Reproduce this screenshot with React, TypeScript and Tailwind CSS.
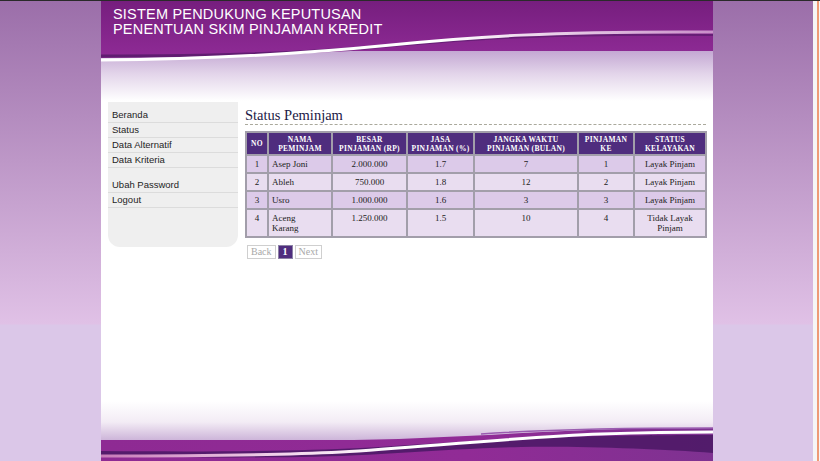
import React from "react";

const menu = [
  { label: "Beranda" },
  { label: "Status" },
  { label: "Data Alternatif" },
  { label: "Data Kriteria", gapAfter: true },
  { label: "Ubah Password" },
  { label: "Logout" },
];

const peminjam = [
  { no: 1, nama: "Asep Joni", besar: "2.000.000", jasa: "1.7", jangka: "7", ke: "1", status: "Layak Pinjam" },
  { no: 2, nama: "Ableh", besar: "750.000", jasa: "1.8", jangka: "12", ke: "2", status: "Layak Pinjam" },
  { no: 3, nama: "Usro", besar: "1.000.000", jasa: "1.6", jangka: "3", ke: "3", status: "Layak Pinjam" },
  { no: 4, nama: "Aceng Karang", besar: "1.250.000", jasa: "1.5", jangka: "10", ke: "4", status: "Tidak Layak Pinjam" },
];

function HeaderArt() {
  return (
    <svg className="absolute inset-0" width="612" height="100" viewBox="0 0 612 100">
      <defs>
        <linearGradient id="hFade" x1="0" y1="0" x2="0" y2="1">
          <stop offset="0" stopColor="#bea0cf" />
          <stop offset="0.5" stopColor="#e3d5ea" />
          <stop offset="1" stopColor="#ffffff" />
        </linearGradient>
        <linearGradient id="hPurple" x1="0" y1="0" x2="0" y2="1">
          <stop offset="0" stopColor="#761e7e" />
          <stop offset="1" stopColor="#8f2b96" />
        </linearGradient>
        <linearGradient id="hStreak" x1="0" y1="0" x2="1" y2="0">
          <stop offset="0" stopColor="#ffffff" />
          <stop offset="0.55" stopColor="#ffffff" />
          <stop offset="1" stopColor="#c98fc9" />
        </linearGradient>
      </defs>
      <rect x="0" y="46" width="612" height="54" fill="url(#hFade)" />
      <path d="M0,0 H612 V50 H250 C200,53 110,56 0,57 Z" fill="url(#hPurple)" />
      <path d="M0,55 C110,55 200,52 260,47" stroke="#4d1762" strokeWidth="3" fill="none" opacity="0.7" />
      <path d="M260,46 C360,36 450,30 612,32" stroke="#4d1762" strokeWidth="2" fill="none" opacity="0.55" transform="translate(0,2)" />
      <path
        d="M0,59 C120,58 210,52 290,44 C370,36 450,30 612,31"
        stroke="url(#hStreak)"
        strokeWidth="3"
        fill="none"
      />
    </svg>
  );
}

function FooterArt() {
  return (
    <svg className="absolute inset-0" width="612" height="60" viewBox="0 0 612 60">
      <defs>
        <linearGradient id="fFade" x1="0" y1="0" x2="0" y2="1">
          <stop offset="0" stopColor="#ffffff" />
          <stop offset="0.35" stopColor="#f3ecf5" />
          <stop offset="0.65" stopColor="#cdb5d9" />
          <stop offset="1" stopColor="#b89ccb" />
        </linearGradient>
        <linearGradient id="fPurple" x1="0" y1="0" x2="1" y2="0">
          <stop offset="0" stopColor="#8e2a93" />
          <stop offset="0.6" stopColor="#912b96" />
          <stop offset="1" stopColor="#7e3291" />
        </linearGradient>
        <linearGradient id="fStreak" x1="0" y1="0" x2="1" y2="0">
          <stop offset="0" stopColor="#c77ab8" />
          <stop offset="0.3" stopColor="#f3d6ec" />
          <stop offset="0.5" stopColor="#ffffff" />
          <stop offset="1" stopColor="#ffffff" />
        </linearGradient>
      </defs>
      <rect x="0" y="0" width="612" height="60" fill="url(#fFade)" />
      <path d="M0,39 H230 C330,39 430,30 520,28 L612,27 V60 H0 Z" fill="url(#fPurple)" />
      <path
        d="M0,50 C120,51 200,50 260,47 C340,42 430,36 500,35 C560,34 590,34 612,34 V52 C560,48 480,45 420,46 C340,48 280,55 200,56 C120,57 60,56 0,55 Z"
        fill="#4e1967"
        opacity="0.9"
      />
      <path d="M380,33 C450,28 540,27 612,27" stroke="#9a5cb0" strokeWidth="1.5" fill="none" />
      <path
        d="M0,55 C100,55 180,54 240,51 C320,46 420,36 500,33 C560,31 590,31 612,31"
        stroke="url(#fStreak)"
        strokeWidth="3"
        fill="none"
      />
    </svg>
  );
}

export default function App() {
  return (
    <div className="w-[820px] h-[461px] overflow-hidden flex flex-col bg-[linear-gradient(to_bottom,#9b6ea9_0px,#e0c1e6_324px,#dbc7e8_325px,#dbc7e8_100%)]">
      <div className="h-px bg-[#2a2a2a]" />
      <div className="flex flex-1">
        <div className="w-[101px] shrink-0" />

        {/* KONTEN UTAMA */}
        <div className="w-[612px] shrink-0 bg-white flex flex-col">
          {/* HEADER */}
          <div className="relative h-[100px]">
            <HeaderArt />
            <div className="relative pl-[12px] pt-[6px] text-white text-[14.5px] leading-[15px] tracking-[0.2px] font-['Liberation_Sans',sans-serif]">
              <p>SISTEM PENDUKUNG KEPUTUSAN</p>
              <p>PENENTUAN SKIM PINJAMAN KREDIT</p>
            </div>
          </div>

          <div className="flex-1 flex gap-[7px] px-[7px] pt-px">
            {/* SIDEBAR MENU */}
            <div className="w-[130px] shrink-0 h-[145px] bg-[#efefef] rounded-b-[12px] pt-[6px] font-['Liberation_Sans',sans-serif] text-[9.5px] text-[#1e1e1e]">
              {menu.map((m) => (
                <div key={m.label} className={m.gapAfter ? "mb-[10px]" : ""}>
                  <div className="h-[15px] leading-[14px] pl-[4px] border-b border-[#dcdcdc]">
                    {m.label}
                  </div>
                </div>
              ))}
            </div>

            {/* STATUS PEMINJAM */}
            <div className="flex-1 min-w-0 font-['Liberation_Serif',serif]">
              <h1 className="pt-[4px] text-[14.5px] leading-[18px] text-[#1c1946] border-b border-dashed border-[#aaa99c]">
                Status Peminjam
              </h1>

              <table className="mt-[6px] w-[460px] table-fixed border-collapse border-2 border-[#a29eaa] text-[9px] text-[#222]">
                <colgroup>
                  <col className="w-[22px]" />
                  <col className="w-[64px]" />
                  <col className="w-[75px]" />
                  <col className="w-[67px]" />
                  <col className="w-[104px]" />
                  <col className="w-[56px]" />
                  <col className="w-[72px]" />
                </colgroup>
                <thead className="bg-[#4f2d7e] text-white text-[7.5px] leading-[9px] tracking-[0.3px] font-bold uppercase">
                  <tr className="h-[23px]">
                    <th className="border-2 border-[#a29eaa] px-[3px] py-[1px]">No</th>
                    <th className="border-2 border-[#a29eaa] px-[3px] py-[1px]">Nama Peminjam</th>
                    <th className="border-2 border-[#a29eaa] px-[3px] py-[1px]">Besar Pinjaman (Rp)</th>
                    <th className="border-2 border-[#a29eaa] px-[3px] py-[1px]">Jasa Pinjaman (%)</th>
                    <th className="border-2 border-[#a29eaa] px-[3px] py-[1px]">Jangka Waktu Pinjaman (Bulan)</th>
                    <th className="border-2 border-[#a29eaa] px-[4px] py-[1px]">Pinjaman Ke</th>
                    <th className="border-2 border-[#a29eaa] px-[3px] py-[1px]">Status Kelayakan</th>
                  </tr>
                </thead>
                <tbody className="leading-[10px]">
                  {peminjam.map((p) => (
                    <tr key={p.no} className={p.no % 2 === 1 ? "bg-[#dccae9]" : "bg-[#e9ddf0]"}>
                      <td className="border-2 border-[#a29eaa] py-[3px] align-top text-center">{p.no}</td>
                      <td className="border-2 border-[#a29eaa] py-[3px] pl-[3px] pr-[12px] align-top">{p.nama}</td>
                      <td className="border-2 border-[#a29eaa] py-[3px] align-top text-center">{p.besar}</td>
                      <td className="border-2 border-[#a29eaa] py-[3px] align-top text-center">{p.jasa}</td>
                      <td className="border-2 border-[#a29eaa] py-[3px] align-top text-center">{p.jangka}</td>
                      <td className="border-2 border-[#a29eaa] py-[3px] align-top text-center">{p.ke}</td>
                      <td className="border-2 border-[#a29eaa] py-[3px] px-[2px] align-top text-center">{p.status}</td>
                    </tr>
                  ))}
                </tbody>
              </table>

              {/* PAGINASI */}
              <div className="mt-[7px] ml-[2px] flex gap-[2px] text-[10px] leading-[12px]">
                <span className="border border-[#cfcfcf] px-[3px] text-[#a8a8a8]">Back</span>
                <span className="border border-[#8d83a6] bg-[#4f2d7e] px-[4px] font-bold text-white">1</span>
                <span className="border border-[#cfcfcf] px-[3px] text-[#a8a8a8]">Next</span>
              </div>
            </div>
          </div>

          {/* FOOTER */}
          <div className="relative h-[60px]">
            <FooterArt />
          </div>
        </div>

        <div className="w-[100px] shrink-0" />
        <div className="w-[7px] shrink-0 flex bg-[#f6f6f6]">
          <div className="w-[4px]" />
          <div className="w-[2px] bg-[#ee9b76]" />
        </div>
      </div>
    </div>
  );
}
